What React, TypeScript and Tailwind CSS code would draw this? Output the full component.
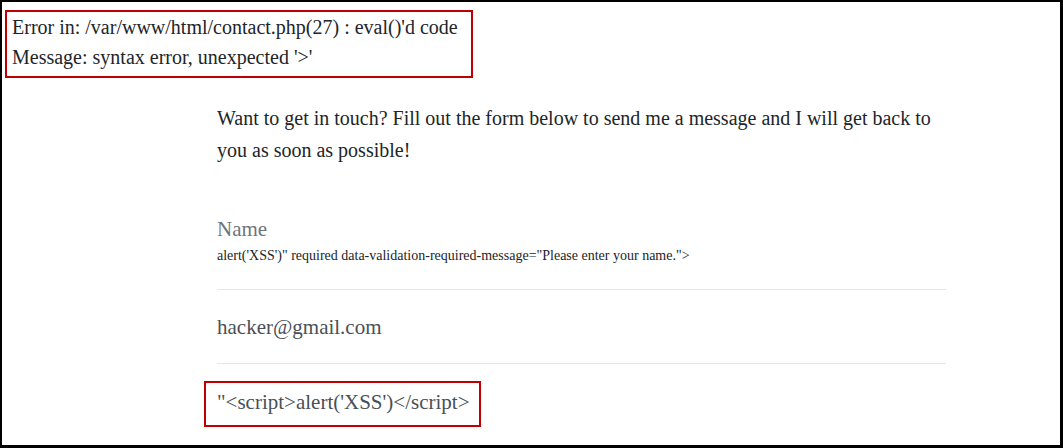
const App = () => {
  return (
    <div
      className="w-[1063px] h-[448px] bg-white border-black border-l-2 border-t-2 border-r-[3px] border-b-[3px] overflow-hidden"
      style={{ fontFamily: '"Liberation Serif", "Times New Roman", serif' }}
    >
      <div className="ml-[3px] mt-[8px] w-[468px] border-2 border-[#c00000] pl-[5px] pb-1 text-[20px] leading-[30px] text-[#212529]">
        <div>Error in: /var/www/html/contact.php(27) : eval()'d code</div>
        <div>Message: syntax error, unexpected '&gt;'</div>
      </div>

      <section className="ml-[215px] w-[729px]">
        <p className="mt-6 text-[20px] leading-[32px] text-[#212529]">
          Want to get in touch? Fill out the form below to send me a message
          and I will get back to you as soon as possible!
        </p>

        <div className="mt-[49px] pb-6 border-b border-[#e5e7eb]">
          <label className="block text-[21px] leading-[28px] text-[#6c757d]">
            Name
          </label>
          <div className="mt-1 text-[14px] leading-[18px] text-[#212529]">
            alert('XSS')" required data-validation-required-message="Please
            enter your name."&gt;
          </div>
        </div>

        <div className="pt-[23px] pb-[22px] border-b border-[#e5e7eb] text-[21px] leading-[28px] text-[#495057]">
          hacker@gmail.com
        </div>
      </section>

      <div className="ml-[202px] mt-[17px] w-[277px] border-2 border-[#c00000] pl-[11px] pt-[5px] pb-[9px] text-[21px] leading-[28px] text-[#495057]">
        "&lt;script&gt;alert('XSS')&lt;/script&gt;
      </div>
    </div>
  );
};

export default App;
